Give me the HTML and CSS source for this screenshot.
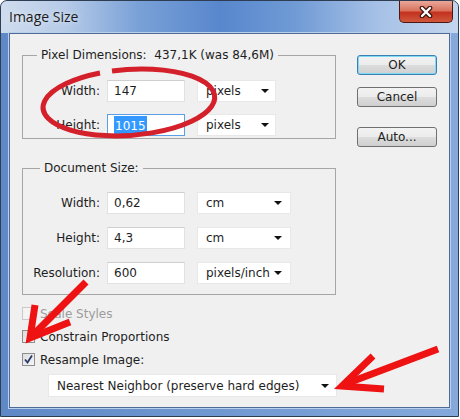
FILE: index.html
```html
<!DOCTYPE html>
<html lang="en">
<head>
  <meta charset="UTF-8" />
  <meta name="viewport" content="width=device-width, initial-scale=1.0"/>
  <title>Image Size</title>
  <link rel="stylesheet" href="styles.css">
</head>
<body>
  <div class="window">
    <div class="titlebar">
      <span class="title">Image Size</span>
      <span class="close">
        <svg width="14" height="12" viewBox="0 0 14 12">
          <path d="M3 2 L11 10 M11 2 L3 10" stroke="#3a1410" stroke-width="4.6" stroke-linecap="round"/>
          <path d="M3 2 L11 10 M11 2 L3 10" stroke="#fff" stroke-width="2.4" stroke-linecap="round"/>
        </svg>
      </span>
    </div>

    <div class="client">
      <div class="main">
        <div class="settings">
          <fieldset class="group pixel">
            <legend>Pixel Dimensions:&nbsp;&nbsp;437,1K (was 84,6M)</legend>
            <div class="row">
              <label>Width:</label>
              <span class="field">147</span>
              <span class="select">pixels</span>
            </div>
            <div class="row">
              <label>Height:</label>
              <span class="field focus"><span class="sel">1015</span></span>
              <span class="select">pixels</span>
            </div>
          </fieldset>

          <fieldset class="group doc">
            <legend>Document Size:</legend>
            <div class="row">
              <label>Width:</label>
              <span class="field">0,62</span>
              <span class="select">cm</span>
            </div>
            <div class="row">
              <label>Height:</label>
              <span class="field">4,3</span>
              <span class="select">cm</span>
            </div>
            <div class="row">
              <label>Resolution:</label>
              <span class="field">600</span>
              <span class="select">pixels/inch</span>
            </div>
          </fieldset>

          <div class="checks">
            <div class="check disabled"><span class="box"></span>Scale Styles</div>
            <div class="check"><span class="box"></span>Constrain Proportions</div>
            <div class="check">
              <span class="box">
                <svg width="11" height="11" viewBox="0 0 11 11">
                  <path d="M2 5.5 L4.5 8.5 L9 1.5" fill="none" stroke="#263a6a" stroke-width="1.8"/>
                </svg>
              </span>Resample Image:
            </div>
          </div>
          <div class="select resample">Nearest Neighbor (preserve hard edges)</div>
        </div>

        <div class="buttons">
          <div class="btn default">OK</div>
          <div class="btn">Cancel</div>
          <div class="btn auto">Auto...</div>
        </div>
      </div>
    </div>

    <!-- markup drawn over the screenshot -->
    <svg class="marks" width="460" height="419" viewBox="0 0 460 419">
      <path d="M112 71 A86 33 -4 1 1 100 73" fill="none" stroke="#d3202a" stroke-width="5"/>
      <line x1="86" y1="282" x2="34" y2="334" stroke="#ee1212" stroke-width="7"/>
      <polyline points="35,305 30,338 70,322" fill="none" stroke="#ee1212" stroke-width="7" stroke-linejoin="miter"/>
      <line x1="438" y1="349" x2="348" y2="383" stroke="#ee1212" stroke-width="7"/>
      <polyline points="373,356 342,386 384,389" fill="none" stroke="#ee1212" stroke-width="7" stroke-linejoin="miter"/>
    </svg>
  </div>
</body>
</html>
```

FILE: styles.css
```css
body {
  margin: 0;
  background: #ffffff;
  font-family: "DejaVu Sans", sans-serif;
  font-size: 12px;
  color: #1e1e1e;
}
.window {
  position: relative;
  width: 457px;
  height: 415px;
  border: 1px solid #2e3d52;
  border-radius: 7px 7px 0 0;
  background: linear-gradient(to right, #5f88c6, #7199d1 50%, #85a9db);
  overflow: hidden;
}
.titlebar {
  height: 32px;
  display: flex;
  justify-content: space-between;
  align-items: flex-start;
  padding-left: 8px;
  background: linear-gradient(to right, #cfdcee 0%, #b6cbe8 14%, #7aa1d7 30%, #5887cd 48%, #6f9ad5 64%, #a5c0e6 82%, #c4d6ee 100%);
}
.title {
  font-family: "Open Sans", sans-serif;
  font-size: 14px;
  line-height: 32px;
  color: #1b1b1b;
  text-shadow: 0 0 6px rgba(255, 255, 255, 0.8);
}
.close {
  width: 52px;
  height: 21px;
  margin-right: 5px;
  border: 1px solid #4c1712;
  border-top: none;
  border-radius: 0 0 5px 5px;
  background: linear-gradient(#e9a89a, #d9745f 45%, #c4321f 55%, #d0583d);
  display: flex;
  align-items: center;
  justify-content: center;
}
.client {
  margin: 0 8px 0 8px;
  height: 373px;
  background: #f0f0f0;
  border: 1px solid #4d6b96;
  box-shadow: 0 0 0 1px #b9cfeb;
}
.main {
  display: flex;
  padding: 14px 0 0 12px;
}
.settings {
  width: 314px;
}
.group {
  margin: 0;
  padding: 17px 0 2px 0;
  border: 1px solid #a6a6a6;
}
.group legend {
  margin-left: 14px;
  padding: 0 4px;
  line-height: 15px;
}
.doc {
  margin-top: 22px;
  padding: 16px 0 10px 0;
}
.doc legend {
  margin-left: 17px;
}
.row {
  display: flex;
  align-items: center;
  height: 22px;
}
.row + .row {
  margin-top: 12px;
}
.doc .row + .row {
  margin-top: 13px;
}
.row label {
  width: 77px;
  margin-right: 7px;
  text-align: right;
}
.field {
  box-sizing: border-box;
  width: 78px;
  height: 22px;
  padding-left: 6px;
  background: #fff;
  border: 1px solid #e2e2e2;
  border-top-color: #cfcfcf;
  display: flex;
  align-items: center;
}
.field.focus {
  border-color: #5a9ee4;
}
.sel {
  background: #3399ff;
  color: #fff;
  padding: 3px 1px 2px;
}
.select {
  box-sizing: border-box;
  margin-left: 12px;
  width: 79px;
  height: 22px;
  padding: 0 6px 0 8px;
  background: #fff;
  border: 1px solid #e8e8e8;
  display: flex;
  align-items: center;
  justify-content: space-between;
}
.select::after {
  content: "";
  border-left: 4px solid transparent;
  border-right: 4px solid transparent;
  border-top: 4px solid #111;
}
.doc .select {
  width: 94px;
  padding-right: 8px;
}
.checks {
  margin-top: 7px;
}
.check {
  display: flex;
  align-items: center;
  gap: 5px;
  height: 23px;
}
.box {
  box-sizing: border-box;
  width: 13px;
  height: 13px;
  border: 1px solid #8e8f8f;
  background: linear-gradient(135deg, #dcdcdc, #f6f6f6);
  display: flex;
  align-items: center;
  justify-content: center;
}
.disabled {
  color: #9c9c9c;
}
.disabled .box {
  border-color: #c9c9c9;
  background: #f4f4f4;
}
.select.resample {
  margin: 3px 0 0 26px;
  width: 289px;
  height: 23px;
  padding-right: 7px;
}
.buttons {
  margin-left: 21px;
  padding-top: 7px;
  display: flex;
  flex-direction: column;
}
.btn {
  box-sizing: border-box;
  width: 80px;
  height: 20px;
  border: 1px solid #707070;
  border-radius: 3px;
  background: linear-gradient(#f3f3f3 0%, #ebebeb 50%, #dddddd 51%, #cfcfcf 100%);
  text-align: center;
  line-height: 18px;
}
.btn + .btn {
  margin-top: 12px;
}
.btn.auto {
  margin-top: 20px;
}
.btn.default {
  border-color: #3c7fb1;
  box-shadow: inset 0 0 0 1px #7fdaf6;
}
.marks {
  position: absolute;
  left: -1px;
  top: -1px;
  pointer-events: none;
}
```
